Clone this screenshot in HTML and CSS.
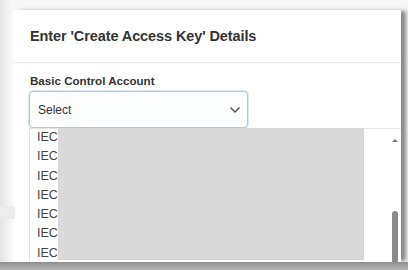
FILE: index.html
```html
<!DOCTYPE html>
<html>
<head>
<meta charset="utf-8">
<link rel="stylesheet" href="styles.css">
</head>
<body>
<div class="page">
  <div class="modal">
    <div class="modal-header">
      <h2 class="title">Enter 'Create Access Key' Details</h2>
    </div>
    <div class="modal-body">
      <label class="label">Basic Control Account</label>
      <div class="select">
        <span class="select-text">Select</span>
        <svg class="chevron" width="12" height="8" viewBox="0 0 12 8"><path d="M1.5 1.5 L6 6 L10.5 1.5" fill="none" stroke="#555" stroke-width="1.5"/></svg>
      </div>
      <div class="behind-row"></div>
    </div>
    <div class="dropdown">
      <ul class="options">
        <li>IEC</li>
        <li>IEC</li>
        <li>IEC</li>
        <li>IEC</li>
        <li>IEC</li>
        <li>IEC</li>
        <li>IEC</li>
      </ul>
      <div class="redact"></div>
      <div class="scrollbar">
        <span class="arrow"></span>
        <span class="thumb"></span>
      </div>
    </div>
  </div>
</div>
</body>
</html>
```

FILE: styles.css
```css
html, body {
  margin: 0;
  padding: 0;
}
body {
  width: 408px;
  height: 270px;
  overflow: hidden;
  background: #efefef;
  font-family: "Liberation Sans", Arial, sans-serif;
}
.page {
  padding: 10px 7px 0 13px;
  height: 270px;
  box-sizing: border-box;
  background: linear-gradient(90deg, #e4e4e4 0, #f7f7f7 11px, #f7f7f7 100%);
  position: relative;
}
.page::after {
  content: "";
  position: absolute;
  left: 0;
  right: 0;
  top: 262px;
  bottom: 0;
  background: linear-gradient(180deg, #8e8e8e 0, #b8b8b8 100%);
}
.modal {
  position: relative;
  background: #fff;
  height: 252px;
  box-shadow: 6px 0 4px -1px #888;
}
.modal-header {
  height: 52px;
  border-bottom: 1px solid #ececec;
  display: flex;
  align-items: center;
  padding: 0 17px;
}
.title {
  margin: 0;
  font-size: 14.5px;
  font-weight: bold;
  color: #333;
  letter-spacing: -0.1px;
}
.modal-body {
  padding: 11px 16px 0;
  position: relative;
}
.label {
  display: block;
  font-size: 11.6px;
  font-weight: bold;
  color: #333;
  margin-left: 1px;
  margin-bottom: 4px;
}
.select {
  width: 219px;
  height: 37px;
  box-sizing: border-box;
  border: 1px solid #a9c8e8;
  border-radius: 4px;
  box-shadow: 0 0 0 1px #dbe8f5;
  display: flex;
  align-items: center;
  justify-content: space-between;
  padding: 0 6px 0 8px;
  background: #fbfdff;
}
.select-text {
  font-size: 12px;
  color: #333;
}
.chevron {
  display: block;
}
.behind-row {
  position: absolute;
  left: -16px;
  top: 143px;
  width: 18px;
  height: 13px;
  background: #ececec;
}
.dropdown {
  position: absolute;
  left: 16px;
  top: 118px;
  right: 0;
  height: 134px;
  background: #fff;
  border-left: 1px solid #e2e2e2;
  border-top: 1px solid #e6e6e6;
}
.options {
  list-style: none;
  margin: 0;
  padding: 0 0 0 7px;
  font-size: 12.5px;
  color: #444;
  line-height: 19.3px;
  margin-top: -1px;
}
.redact {
  position: absolute;
  left: 28px;
  top: -1px;
  width: 306px;
  height: 131px;
  background: #d9d9d9;
  border-bottom: 1px solid #cfcfcf;
}
.scrollbar {
  position: absolute;
  right: 2px;
  top: 0;
  width: 8px;
  bottom: 0;
}
.arrow {
  position: absolute;
  left: 1px;
  top: 10px;
  width: 0;
  height: 0;
  border-left: 3px solid transparent;
  border-right: 3px solid transparent;
  border-bottom: 3px solid #777;
}
.thumb {
  position: absolute;
  left: 1px;
  top: 82px;
  width: 6px;
  bottom: 0;
  border-radius: 3px 3px 0 0;
  background: #8a8a8a;
}
```
